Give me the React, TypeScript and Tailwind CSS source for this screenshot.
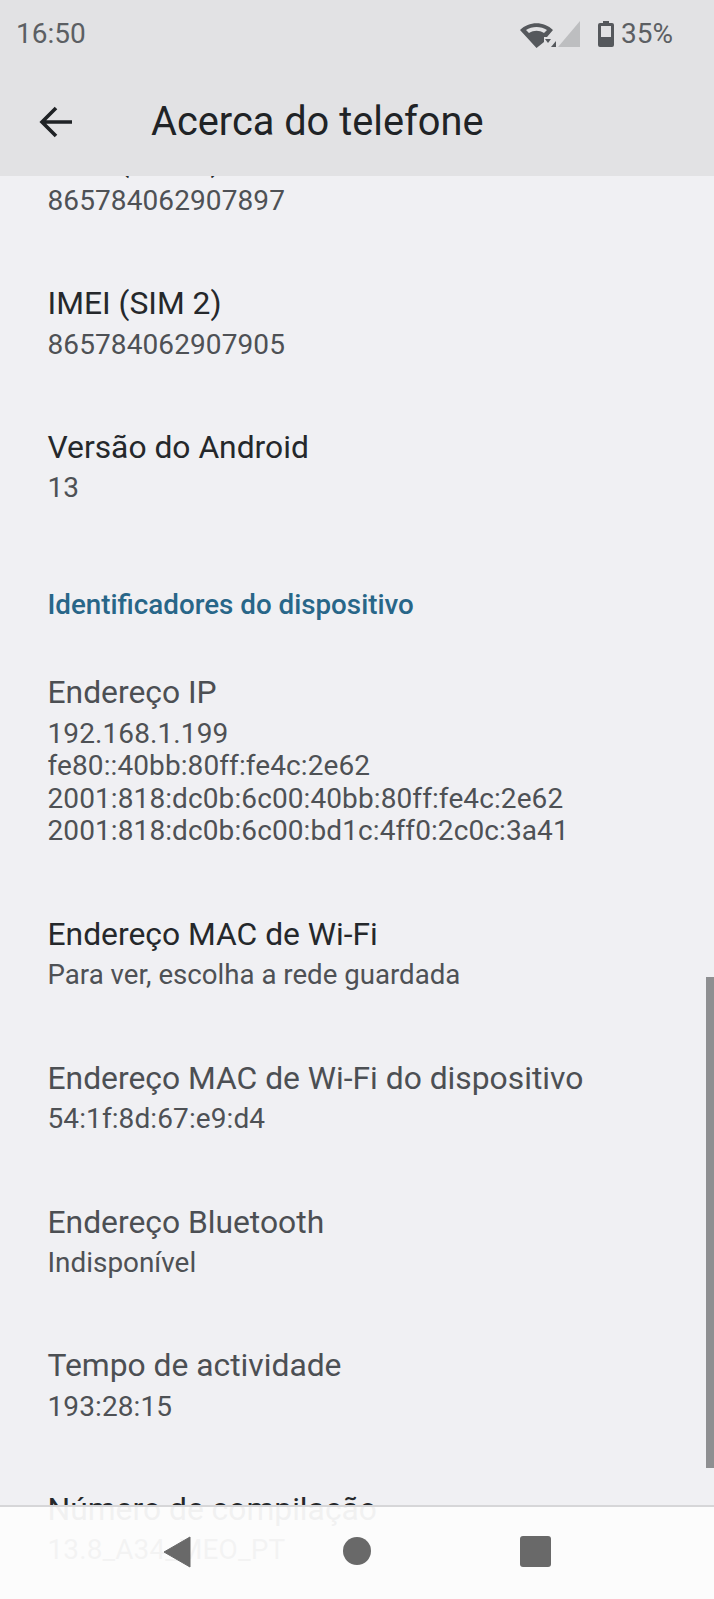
import React from "react";

type Row = { title: string; values: string[]; dim?: boolean; valueSize?: string };

const topRows: Row[] = [
  { title: "IMEI (SIM 1)", values: ["865784062907897"] },
  { title: "IMEI (SIM 2)", values: ["865784062907905"] },
  { title: "Versão do Android", values: ["13"] },
];

const idRows: Row[] = [
  {
    title: "Endereço IP",
    values: [
      "192.168.1.199",
      "fe80::40bb:80ff:fe4c:2e62",
      "2001:818:dc0b:6c00:40bb:80ff:fe4c:2e62",
      "2001:818:dc0b:6c00:bd1c:4ff0:2c0c:3a41",
    ],
    dim: true,
  },
  { title: "Endereço MAC de Wi-Fi", values: ["Para ver, escolha a rede guardada"], valueSize: "text-[27.65px]" },
  { title: "Endereço MAC de Wi-Fi do dispositivo", values: ["54:1f:8d:67:e9:d4"], dim: true },
  { title: "Endereço Bluetooth", values: ["Indisponível"], dim: true, valueSize: "text-[27.9px]" },
  { title: "Tempo de actividade", values: ["193:28:15"], dim: true },
  { title: "Número de compilação", values: ["13.8_A34_MEO_PT"] },
];

const InfoRow = ({ row }: { row: Row }) => (
  <div className="px-[47.5px] py-[34px]">
    <div className={`text-[31.8px] leading-[37.2px] ${row.dim ? "text-[#4c4f53]" : "text-[#25282b]"}`}>{row.title}</div>
    <div className={`mt-[6px] leading-[32.6px] text-[#4e5155] ${row.valueSize ?? "text-[28px] tracking-[0.1px]"}`}>
      {row.values.map((v) => (
        <div key={v}>{v}</div>
      ))}
    </div>
  </div>
);

export default function App() {
  return (
    <div className="relative flex h-[1599px] w-[714px] flex-col overflow-hidden bg-[#f0f0f3] font-[Roboto,sans-serif]">
      {/* Top bars */}
      <div className="z-10 h-[176px] shrink-0 bg-[#e2e2e4]">
        <div className="flex h-[68px] items-center justify-between pl-[16px] pr-[41px] text-[28px] text-[#5c5f63]">
          <span>16:50</span>
          <div className="flex items-center">
            <svg width="33" height="26" viewBox="0 0 33 26" className="mt-[2px]">
              <path d="M0 8 C9 -1 24 -1 33 8 L27 15 L24 15 L24 20 L16.5 26 Z" fill="#55585c" />
              <path d="M6 8 C12 4 21 4 27 8 L24 11 C19 8 14 8 9 11 Z" fill="#e2e2e4" />
              <path d="M25 17 h6 l-3 4 Z" fill="#55585c" />
            </svg>
            <svg width="29" height="28" viewBox="0 0 29 28" className="ml-[-2px]">
              <path d="M7 27 L29 1 V27 Z" fill="#bdbec0" />
              <path d="M0 27 L5 21 V27 Z" fill="#55585c" />
            </svg>
            <svg width="16" height="26" viewBox="0 0 16 26" className="ml-[18px]">
              <path d="M5 0 H11 V2 H14 Q16 2 16 4 V24 Q16 26 14 26 H2 Q0 26 0 24 V4 Q0 2 2 2 H5 Z" fill="#55585c" />
              <rect x="3" y="5" width="10" height="11" fill="#e2e2e4" />
            </svg>
            <span className="ml-[7px]">35%</span>
          </div>
        </div>
        <div className="flex h-[106px] items-center pt-[2px]">
          <svg width="34" height="32" viewBox="0 0 34 32" fill="none" stroke="#1f2225" strokeWidth="3.6" className="ml-[39px]">
            <path d="M33 16 H3 M17 2 L3 16 L17 30" />
          </svg>
          <h1 className="ml-[78px] text-[39.75px] leading-none font-normal text-[#202326]">Acerca do telefone</h1>
        </div>
      </div>

      {/* Scrolled list */}
      <div className="mt-[-68.5px]">
        {topRows.map((r) => (
          <InfoRow key={r.title} row={r} />
        ))}
        <div className="px-[47.5px] pt-[47px] pb-[17.5px] text-[27.75px] leading-[37px] font-medium text-[#286688]">
          Identificadores do dispositivo
        </div>
        {idRows.map((r) => (
          <InfoRow key={r.title} row={r} />
        ))}
      </div>

      {/* Scrollbar */}
      <div className="absolute top-[977px] right-0 h-[491px] w-[8px] bg-[#8e8f91]" />

      {/* Navigation bar */}
      <div className="absolute inset-x-0 bottom-0 z-20 h-[94px] border-t-2 border-[#d6d6d8] bg-[#fcfcfc]/95">
        <svg width="28" height="32" viewBox="0 0 28 32" className="absolute top-[29px] left-[163px]">
          <path d="M27 1 V31 L1 16 Z" fill="#696969" stroke="#696969" strokeLinejoin="round" />
        </svg>
        <div className="absolute top-[30px] left-[343px] h-[28px] w-[28px] rounded-full bg-[#696969]" />
        <div className="absolute top-[29px] left-[520px] h-[31px] w-[31px] rounded-[3px] bg-[#696969]" />
      </div>
    </div>
  );
}
